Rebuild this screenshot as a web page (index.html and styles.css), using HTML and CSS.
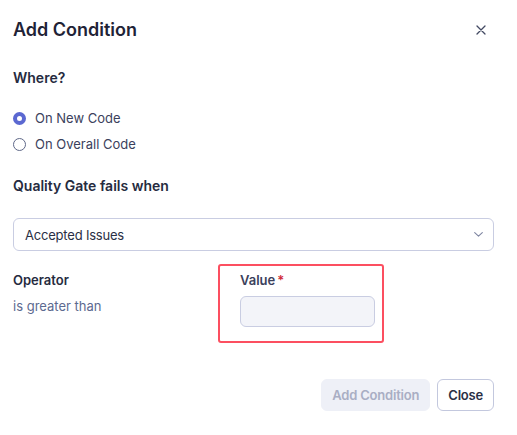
FILE: index.html
```html
<!DOCTYPE html>
<html lang="en">
<head>
<meta charset="utf-8">
<title>Add Condition</title>
<link rel="stylesheet" href="styles.css">
</head>
<body>
<div class="dialog">
  <div class="header">
    <h1 class="title">Add Condition</h1>
    <button class="icon-btn" aria-label="Close">
      <svg width="10" height="10" viewBox="0 0 10 10"><path d="M1 1L9 9M9 1L1 9" stroke="#434a63" stroke-width="1.3" stroke-linecap="round"/></svg>
    </button>
  </div>

  <div class="section-label where">Where?</div>
  <div class="radios">
    <label class="radio-row"><span class="radio checked"></span><span>On New Code</span></label>
    <label class="radio-row"><span class="radio"></span><span>On Overall Code</span></label>
  </div>

  <div class="section-label fails">Quality Gate fails when</div>
  <div class="select">
    <span>Accepted Issues</span>
    <svg width="9" height="5" viewBox="0 0 9 5"><path d="M0.7 0.7L4.5 4.2L8.3 0.7" fill="none" stroke="#7d84a0" stroke-width="1.1" stroke-linecap="round" stroke-linejoin="round"/></svg>
  </div>

  <div class="row">
    <div class="operator">
      <div class="field-label">Operator</div>
      <div class="operator-value">is greater than</div>
    </div>
    <div class="value-box">
      <div class="field-label">Value<span class="req">*</span></div>
      <div class="input"></div>
    </div>
  </div>

  <div class="footer">
    <button class="btn btn-primary" disabled>Add Condition</button>
    <button class="btn btn-secondary">Close</button>
  </div>
</div>
</body>
</html>
```

FILE: styles.css
```css
* { box-sizing: border-box; }
body {
  margin: 0;
  background: #ffffff;
  font-family: Inter, "Noto Sans", "Liberation Sans", sans-serif;
  color: #2a2f45;
}
.dialog {
  width: 517px;
  padding: 18px 23px 0 13px;
}
.header {
  display: flex;
  justify-content: space-between;
  align-items: center;
}
.title {
  margin: 0;
  font-size: 18px;
  line-height: 24px;
  font-weight: 600;
  color: #1f2336;
}
.icon-btn {
  width: 24px;
  height: 24px;
  padding: 0;
  margin-right: 1px;
  border: none;
  background: transparent;
  display: flex;
  align-items: center;
  justify-content: center;
}
.section-label {
  font-size: 14px;
  line-height: 20px;
  font-weight: 600;
  color: #262b40;
}
.where { margin-top: 26px; }
.radios {
  margin-top: 20px;
  display: flex;
  flex-direction: column;
  gap: 6px;
}
.radio-row {
  display: flex;
  align-items: center;
  gap: 9px;
  height: 20px;
  font-size: 13px;
  color: #3b415c;
}
.radio {
  width: 13px;
  height: 13px;
  border-radius: 50%;
  border: 1px solid #5f6888;
  background: #fff;
  flex: none;
}
.radio.checked {
  border: 4px solid #5b68d1;
  background: #fff;
}
.fails { margin-top: 22px; }
.select {
  margin-top: 22px;
  height: 33px;
  border: 1px solid #c9cde2;
  border-radius: 6px;
  display: flex;
  align-items: center;
  justify-content: space-between;
  padding: 0 10px 0 11px;
  font-size: 13px;
  letter-spacing: -0.2px;
  color: #2a2f45;
}
.row {
  margin-top: 13px;
  display: flex;
  align-items: flex-start;
}
.operator {
  width: 205px;
  padding-top: 7px;
}
.field-label {
  font-size: 13px;
  line-height: 18px;
  font-weight: 600;
  color: #262b40;
}
.req {
  color: #d02b3a;
  margin-left: 2px;
}
.operator-value {
  margin-top: 8px;
  font-size: 13px;
  line-height: 18px;
  color: #5d6a90;
}
.value-box {
  width: 166px;
  border: 2px solid #fc4f60;
  border-radius: 3px;
  padding: 5px 7px 14px 20px;
}
.value-box .field-label { color: #3b415c; }
.input {
  margin-top: 7px;
  width: 135px;
  height: 31px;
  background: #f3f4f9;
  border: 1px solid #c9cde2;
  border-radius: 6px;
}
.footer {
  margin-top: 36px;
  display: flex;
  justify-content: flex-end;
  gap: 7px;
}
.btn {
  height: 32px;
  border-radius: 6px;
  font-family: inherit;
  font-size: 13px;
  font-weight: 600;
  letter-spacing: -0.2px;
  padding: 0 10px;
}
.btn-primary {
  background: #eef0f7;
  color: #a9aec4;
  border: 1px solid #eef0f7;
}
.btn-secondary {
  background: #fff;
  color: #2a2f45;
  border: 1px solid #c3c8de;
}
```
